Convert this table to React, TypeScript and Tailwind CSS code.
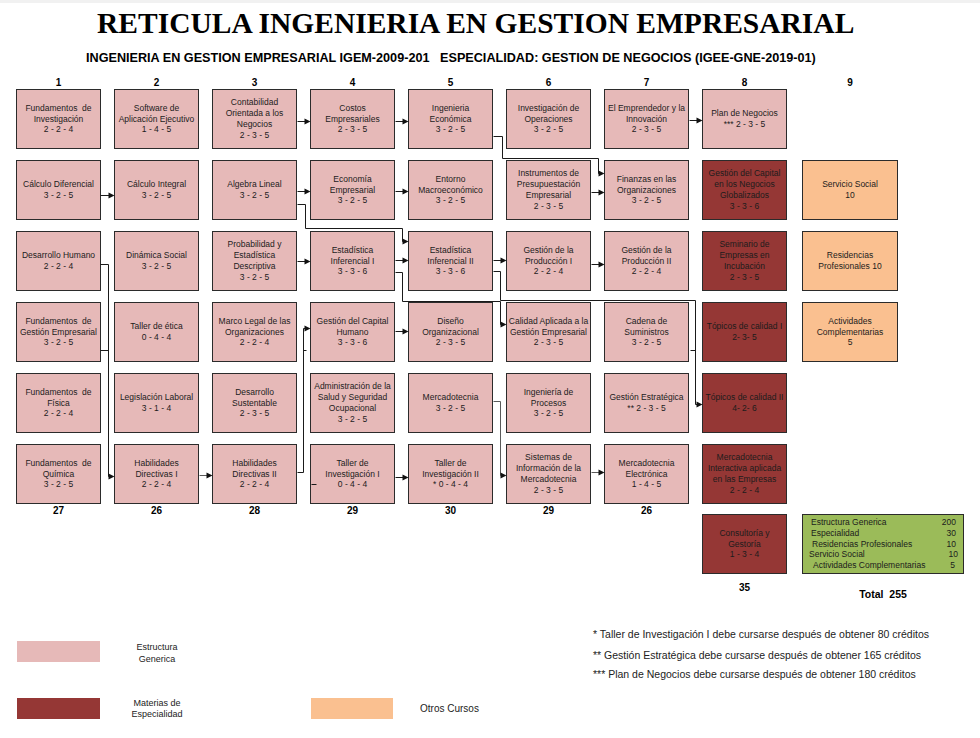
import React from "react";

type Cell = { t: string; c?: "p" | "d" | "o" } | null;

// Retícula: 6 filas x 9 semestres (texto separado por "|")
const ROWS: Cell[][] = [
  [
    { t: "Fundamentos  de|Investigación|2 - 2 - 4" },
    { t: "Software de|Aplicación Ejecutivo|1 - 4 - 5" },
    { t: "Contabilidad|Orientada a los|Negocios|2 - 3 - 5" },
    { t: "Costos|Empresariales|2 - 3 - 5" },
    { t: "Ingenieria|Económica|3 - 2 - 5" },
    { t: "Investigación de|Operaciones|3 - 2 - 5" },
    { t: "El Emprendedor y la|Innovación|2 - 3 - 5" },
    { t: "Plan de Negocios|*** 2 - 3 - 5" },
    null,
  ],
  [
    { t: "Cálculo Diferencial|3 - 2 - 5" },
    { t: "Cálculo Integral|3 - 2 - 5" },
    { t: "Algebra Lineal|3 - 2 - 5" },
    { t: "Economía|Empresarial|3 - 2 - 5" },
    { t: "Entorno|Macroeconómico|3 - 2 - 5" },
    { t: "Instrumentos de|Presupuestación|Empresarial|2 - 3 - 5" },
    { t: "Finanzas en las|Organizaciones|3 - 2 - 5" },
    { t: "Gestión del Capital|en los Negocios|Globalizados|3 - 3 - 6", c: "d" },
    { t: "Servicio Social|10", c: "o" },
  ],
  [
    { t: "Desarrollo Humano|2 - 2 - 4" },
    { t: "Dinámica Social|3 - 2 - 5" },
    { t: "Probabilidad y|Estadística|Descriptiva|3 - 2 - 5" },
    { t: "Estadística|Inferencial I|3 - 3 - 6" },
    { t: "Estadística|Inferencial II|3 - 3 - 6" },
    { t: "Gestión de la|Producción I|2 - 2 - 4" },
    { t: "Gestión de la|Producción II|2 - 2 - 4" },
    { t: "Seminario de|Empresas en|Incubación|2 - 3 - 5", c: "d" },
    { t: "Residencias|Profesionales 10", c: "o" },
  ],
  [
    { t: "Fundamentos  de|Gestión Empresarial|3 - 2 - 5" },
    { t: "Taller de ética|0 - 4 - 4" },
    { t: "Marco Legal de las|Organizaciones|2 - 2 - 4" },
    { t: "Gestión del Capital|Humano|3 - 3 - 6" },
    { t: "Diseño|Organizacional|2 - 3 - 5" },
    { t: "Calidad Aplicada a la|Gestión Empresarial|2 - 3 - 5" },
    { t: "Cadena de|Suministros|3 - 2 - 5" },
    { t: "Tópicos de calidad I|2- 3- 5", c: "d" },
    { t: "Actividades|Complementarias|5", c: "o" },
  ],
  [
    { t: "Fundamentos  de|Física|2 - 2 - 4" },
    { t: "Legislación Laboral|3 - 1 - 4" },
    { t: "Desarrollo|Sustentable|2 - 3 - 5" },
    { t: "Administración de la|Salud y Seguridad|Ocupacional|3 - 2 - 5" },
    { t: "Mercadotecnia|3 - 2 - 5" },
    { t: "Ingeniería de|Procesos|3 - 2 - 5" },
    { t: "Gestión Estratégica|** 2 - 3 - 5" },
    { t: "Tópicos de calidad II|4- 2- 6", c: "d" },
    null,
  ],
  [
    { t: "Fundamentos  de|Química|3 - 2 - 5" },
    { t: "Habilidades|Directivas I|2 - 2 - 4" },
    { t: "Habilidades|Directivas II|2 - 2 - 4" },
    { t: "Taller de|Investigación I|0 - 4 - 4" },
    { t: "Taller de|Investigación II|* 0 - 4 - 4" },
    { t: "Sistemas de|Información de la|Mercadotecnia|2 - 3 - 5" },
    { t: "Mercadotecnia|Electrónica|1 - 4 - 5" },
    { t: "Mercadotecnia|Interactiva aplicada|en las Empresas|2 - 2 - 4", c: "d" },
    null,
  ],
];

const CREDITS = ["27", "26", "28", "29", "30", "29", "26"];

const BG = { p: "bg-[#e6b9b8]", d: "bg-[#953735]", o: "bg-[#fac090]" };

// conexiones (coordenadas de la página); a = termina en flecha
const LINES: { p: [number, number][]; a?: boolean; g?: boolean }[] = [
  { p: [[297, 118], [310, 118]], a: true },
  { p: [[395, 118], [408, 118]], a: true },
  { p: [[689, 117], [702, 117]], a: true },
  { p: [[493, 133], [502, 133], [502, 155], [598, 155], [598, 170], [604, 170]], a: true },
  { p: [[100, 192], [114, 192]], a: true },
  { p: [[297, 188], [310, 188]], a: true },
  { p: [[395, 188], [408, 188]], a: true },
  { p: [[591, 189], [604, 189]], a: true },
  { p: [[297, 201], [305, 201], [305, 225], [402, 225], [402, 238], [408, 238]], a: true },
  { p: [[100, 261], [108, 261], [108, 473], [114, 473]], a: true },
  { p: [[297, 258], [310, 258]], a: true },
  { p: [[395, 257], [408, 257]], a: true },
  { p: [[395, 269], [402, 269], [402, 298], [500, 298], [500, 321], [506, 321]], a: true },
  { p: [[493, 257], [506, 257]], a: true },
  { p: [[591, 261], [604, 261]], a: true },
  { p: [[493, 268], [500, 268], [500, 297], [695, 297], [695, 401], [702, 401]], a: true },
  { p: [[395, 328], [408, 328]], a: true },
  { p: [[297, 469], [303, 469], [303, 325], [310, 325]], a: true },
  { p: [[199, 472], [212, 472]], a: true, g: true },
  { p: [[395, 474], [408, 474]], a: true },
  { p: [[493, 398], [500, 398], [500, 472], [506, 472]], a: true, g: true },
  { p: [[591, 469], [604, 469]], a: true, g: true },
  { p: [[100, 347], [108, 347]] },
  { p: [[303, 347], [306, 347]] },
  { p: [[311, 481], [316, 481]] },
  { p: [[690, 347], [695, 347]] },
];

function Connectors() {
  return (
    <svg
      className="absolute top-0 left-0 pointer-events-none"
      width={980}
      height={738}
      viewBox="0 0 980 738"
    >
      {LINES.map((l, i) => {
        const color = l.g ? "#5a5a5a" : "#1a1a1a";
        const pts = l.p.map(([x, y]) => [x + 0.5, y + 0.5]);
        const last = pts[pts.length - 1];
        if (l.a) pts[pts.length - 1] = [last[0] - 5, last[1]];
        return (
          <g key={i}>
            <polyline
              points={pts.map((q) => q.join(",")).join(" ")}
              fill="none"
              stroke={color}
              strokeWidth={1}
            />
            {l.a && (
              <polygon
                points={`${last[0]},${last[1]} ${last[0] - 6},${last[1] - 3} ${last[0] - 6},${last[1] + 3}`}
                fill="#111"
              />
            )}
          </g>
        );
      })}
    </svg>
  );
}

function Box({ cell, last }: { cell: Cell; last?: boolean }) {
  if (!cell) return <div />;
  const lines = cell.t.split("|");
  return (
    <div
      className={`${BG[cell.c ?? "p"]} ${last ? "ml-[2px] w-[96px]" : ""} h-[60px] border border-[#2b2b2b] flex flex-col items-center justify-center text-center text-[8.5px] leading-[10.8px] text-[#1c1c1c] whitespace-pre`}
    >
      {lines.map((s, i) => (
        <div key={i}>{s}</div>
      ))}
    </div>
  );
}

const GRID = "grid grid-cols-[repeat(8,85px)_98px] gap-x-[13px]";

export default function App() {
  return (
    <div className="relative w-[980px] h-[738px] overflow-hidden bg-white border-t-[3px] border-[#f1f1f1] font-['Liberation_Sans',Arial,sans-serif] text-[#1a1a1a]">
      <h1 className="pl-[97px] pt-[4px] text-[29.5px] leading-[33px] font-bold font-['Liberation_Serif','Times_New_Roman',serif] text-black whitespace-nowrap">
        RETICULA INGENIERIA EN GESTION EMPRESARIAL
      </h1>
      <p className="mt-[11px] pl-[86px] text-[12.65px] leading-[15px] font-bold text-black whitespace-pre">
        {"INGENIERIA EN GESTION EMPRESARIAL IGEM-2009-201   ESPECIALIDAD: GESTION DE NEGOCIOS (IGEE-GNE-2019-01)"}
      </p>

      <div className="mt-[11px] pl-[16px]">
        <div className={`${GRID} text-[10px] leading-[12px] font-bold text-black text-center`}>
          {[1, 2, 3, 4, 5, 6, 7, 8, 9].map((n) => (
            <div key={n} className={n === 9 ? "ml-[2px] w-[96px]" : ""}>
              {n}
            </div>
          ))}
        </div>

        <div className={`${GRID} gap-y-[11px]`}>
          {ROWS.flatMap((row, r) =>
            row.map((cell, c) => <Box key={`${r}-${c}`} cell={cell} last={c === 8} />)
          )}
        </div>

        <div className={`${GRID} text-[10px] leading-[13px] h-[10px] font-bold text-black text-center`}>
          {CREDITS.map((n, i) => (
            <div key={i}>{n}</div>
          ))}
        </div>

        <div className="flex">
          <div className="ml-[686px] w-[85px] h-[60px] bg-[#953735] border border-[#2b2b2b] flex flex-col items-center justify-center text-center text-[8.5px] leading-[10.8px] text-[#1c1c1c]">
            <div>Consultoría y</div>
            <div>Gestoría</div>
            <div>1 - 3 - 4</div>
          </div>
          <div className="ml-[15px] w-[162px] h-[60px] bg-[#9bbb59] border border-[#2b2b2b] flex flex-col justify-center text-[8.5px] leading-[10.7px] text-[#1c1c1c] pl-[8px] pr-[7px]">
            <div className="flex justify-between">
              <span>Estructura Generica</span>
              <span>200</span>
            </div>
            <div className="flex justify-between">
              <span>Especialidad</span>
              <span>30</span>
            </div>
            <div className="flex justify-between pl-[1px]">
              <span>Residencias Profesionales</span>
              <span>10</span>
            </div>
            <div className="flex justify-between -ml-[2px] -mr-[2px]">
              <span>Servicio Social</span>
              <span>10</span>
            </div>
            <div className="flex justify-between pl-[2px] pr-[1px]">
              <span>Actividades Complementarias</span>
              <span>5</span>
            </div>
          </div>
        </div>

        <div className="flex h-[30px] items-start font-bold text-black">
          <div className="ml-[686px] w-[85px] mt-[8px] text-center text-[10px] leading-[12px]">35</div>
          <div className="ml-[15px] w-[162px] mt-[14px] text-center text-[10.5px] leading-[12px] whitespace-pre">
            {"Total  255"}
          </div>
        </div>
      </div>

      <div className="mt-[20px] flex h-[74px] items-start">
        <div className="ml-[17px] mt-[17px] w-[83px] h-[21px] bg-[#e6b9b8]" />
        <div className="mt-[17px] w-[114px] text-center text-[9px] leading-[12px] text-[#222]">
          <div>Estructura</div>
          <div>Generica</div>
        </div>
        <div className="ml-[379px] text-[10.5px] text-[#222] whitespace-nowrap">
          <div className="leading-[20px]">* Taller de Investigación I debe cursarse después de obtener 80 créditos</div>
          <div className="leading-[22px]">** Gestión Estratégica debe cursarse después de obtener 165 créditos</div>
          <div className="leading-[17px]">*** Plan de Negocios debe cursarse después de obtener 180 créditos</div>
        </div>
      </div>

      <div className="flex items-start">
        <div className="ml-[17px] w-[83px] h-[21px] bg-[#953735]" />
        <div className="w-[114px] text-center text-[9px] leading-[11px] text-[#222]">
          <div>Materias de</div>
          <div>Especialidad</div>
        </div>
        <div className="ml-[97px] w-[82px] h-[21px] bg-[#fac090]" />
        <div className="ml-[27px] text-[10px] leading-[21px] text-[#222]">Otros Cursos</div>
      </div>

      <Connectors />
    </div>
  );
}
